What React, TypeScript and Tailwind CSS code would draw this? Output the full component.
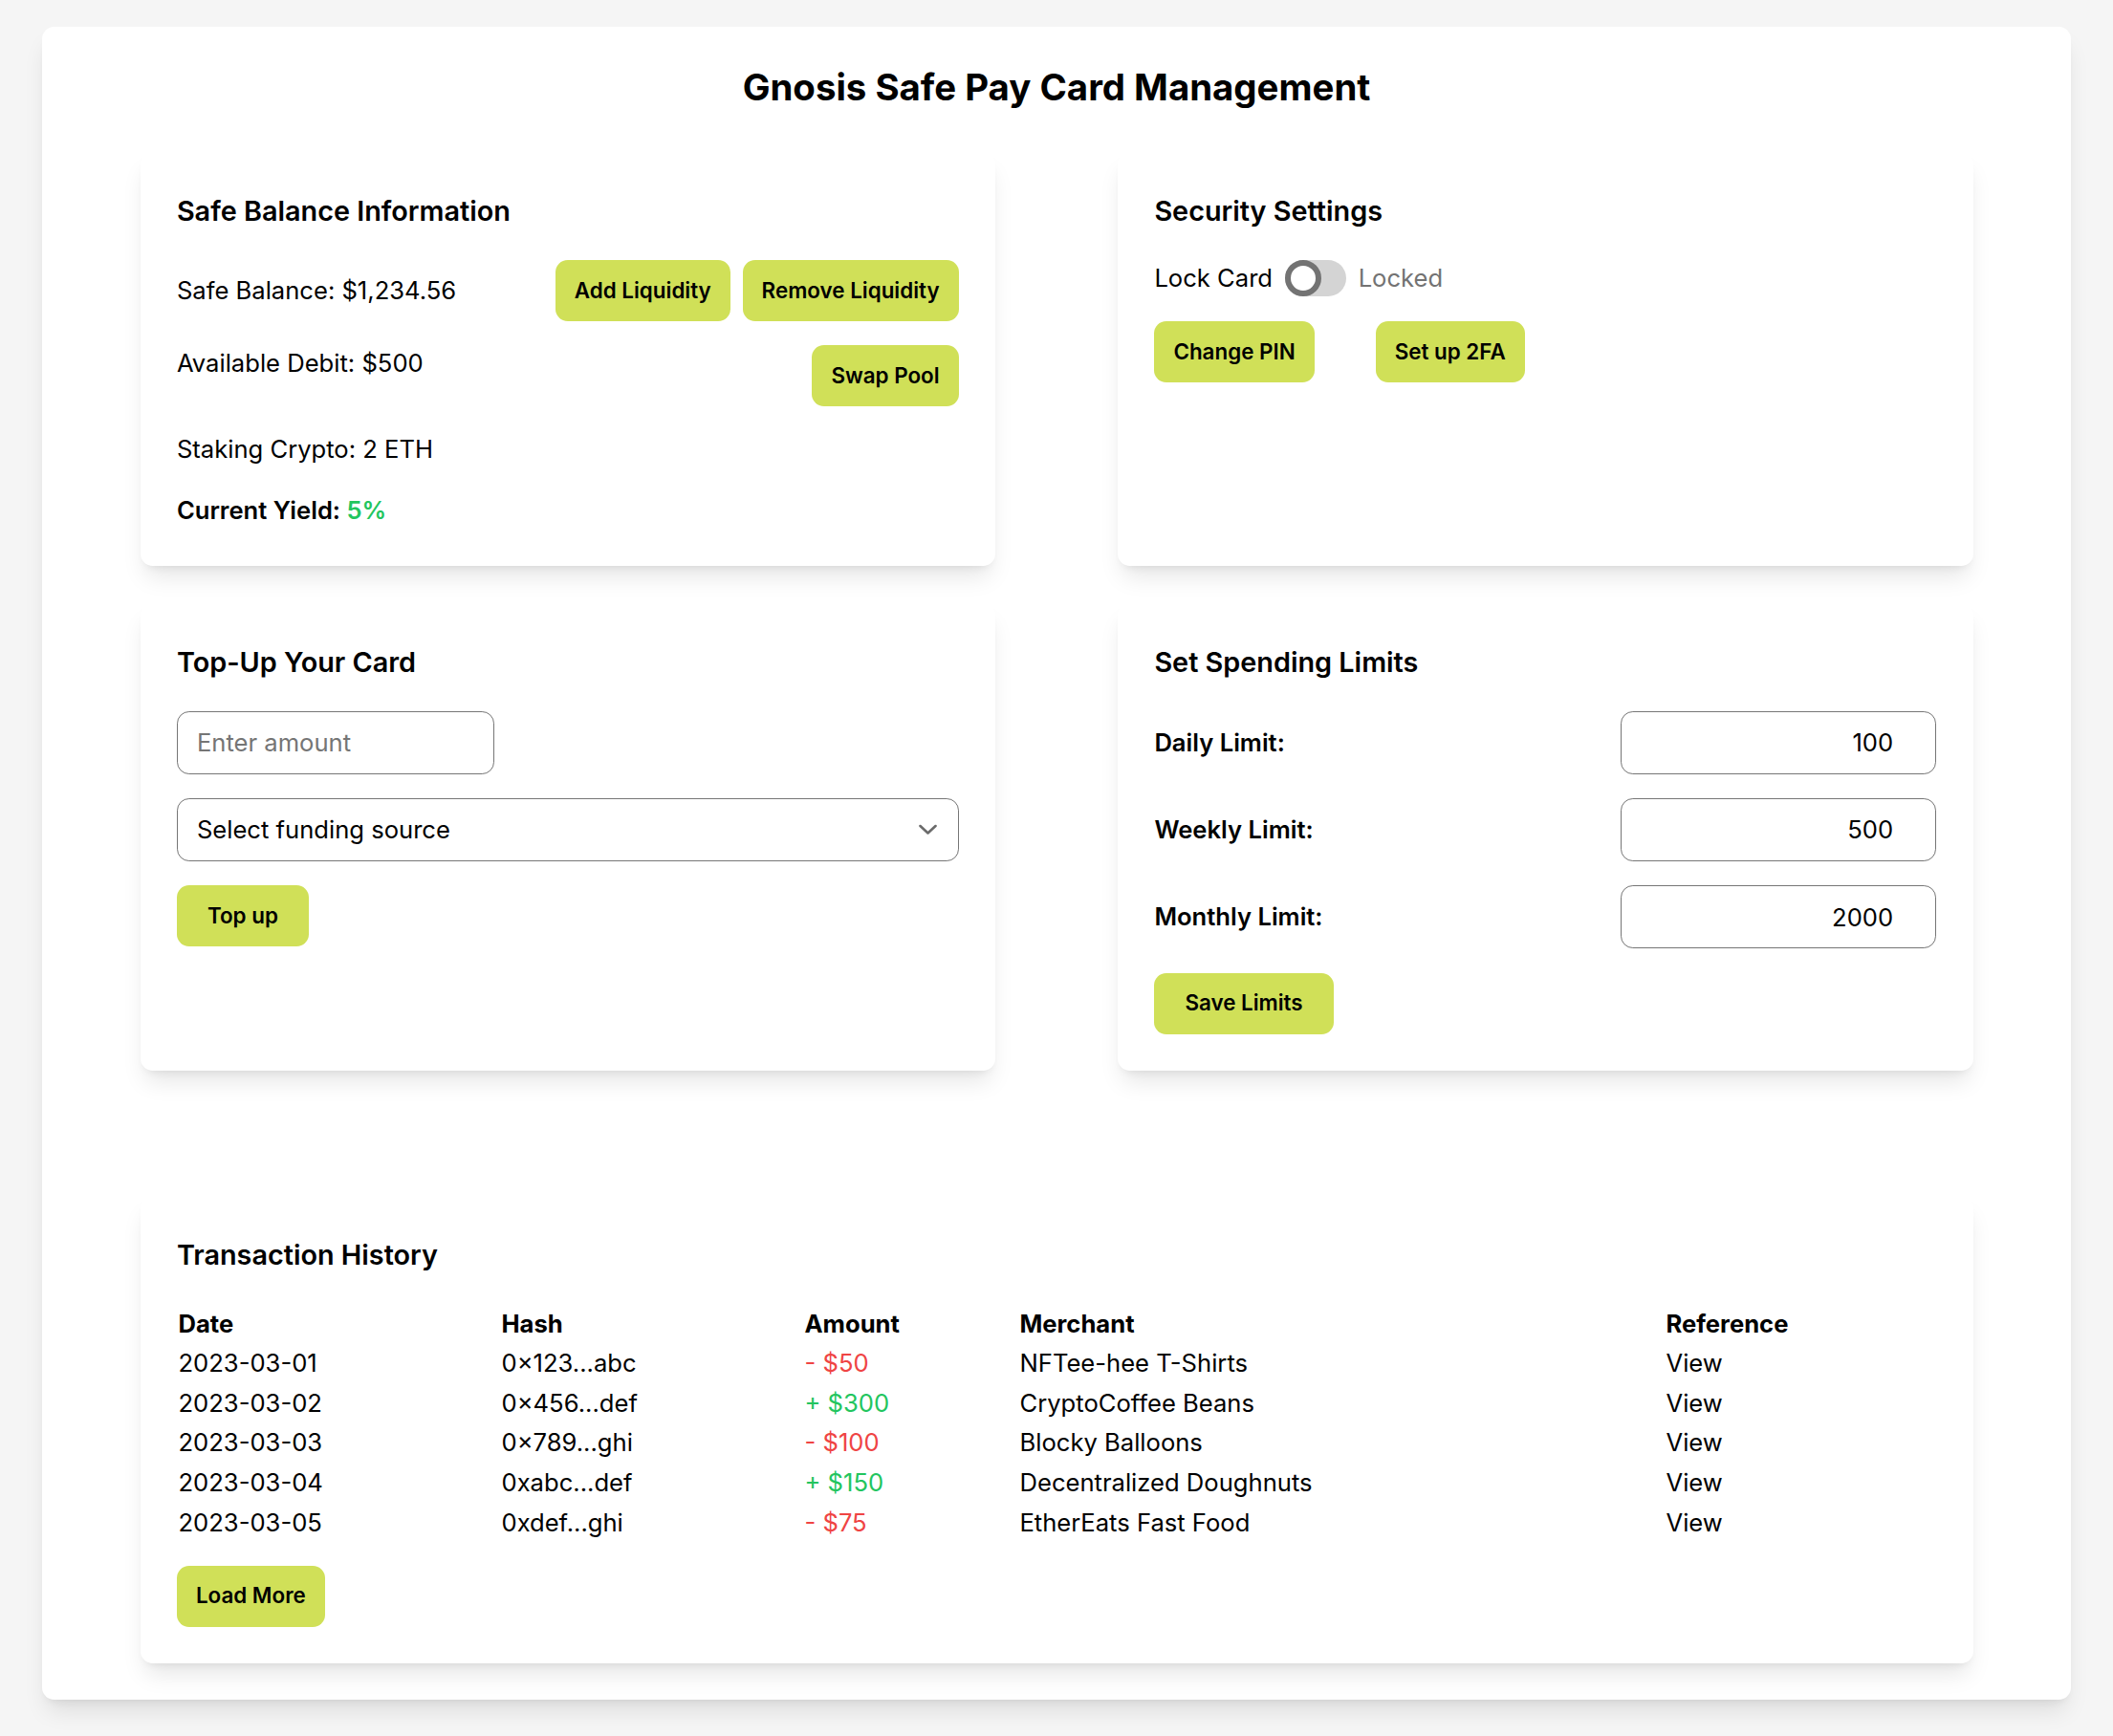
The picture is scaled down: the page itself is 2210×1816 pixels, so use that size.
import React, { useState } from "react";

const transactions = [
    { date: "2023-03-01", hash: "0×123...abc", amount: "- $50", positive: false, merchant: "NFTee-hee T-Shirts" },
    { date: "2023-03-02", hash: "0×456...def", amount: "+ $300", positive: true, merchant: "CryptoCoffee Beans" },
    { date: "2023-03-03", hash: "0×789...ghi", amount: "- $100", positive: false, merchant: "Blocky Balloons" },
    { date: "2023-03-04", hash: "0xabc...def", amount: "+ $150", positive: true, merchant: "Decentralized Doughnuts" },
    { date: "2023-03-05", hash: "0xdef...ghi", amount: "- $75", positive: false, merchant: "EtherEats Fast Food" },
];

const Button: React.FC<{ children: React.ReactNode; wide?: boolean }> = ({ children, wide }) => (
    <button
        className={`h-[64px] ${wide ? "px-[32px]" : "px-[20px]"} rounded-[12.8px] bg-[#d0e058] text-[22.4px] font-semibold text-black whitespace-nowrap`}
    >
        {children}
    </button>
);

const Card: React.FC<{ title: string; className?: string; children: React.ReactNode }> = ({ title, className = "", children }) => (
    <section
        className={`bg-white rounded-[12.8px] p-[38.4px] shadow-[0_16px_24px_-5px_rgba(0,0,0,0.1),0_6px_10px_-6px_rgba(0,0,0,0.1)] ${className}`}
    >
        <h2 className="text-[28.8px] leading-[44.8px] font-semibold mt-[2px] mb-[28px]">{title}</h2>
        {children}
    </section>
);

export default function App() {
    const [locked, setLocked] = useState(false);
    const [limits, setLimits] = useState({ daily: "100", weekly: "500", monthly: "2000" });

    return (
        <div className="min-h-screen bg-[#f5f5f5] px-[44px] pt-[28px] pb-[30px] font-['Inter',sans-serif] text-black text-[25.6px] leading-[38.4px]">
            <div className="bg-white rounded-[12.8px] p-[38.4px] shadow-[0_16px_24px_-5px_rgba(0,0,0,0.1),0_6px_10px_-6px_rgba(0,0,0,0.1)]">
                <h1 className="text-center text-[38.4px] leading-[51.2px] font-bold mb-[41px]">Gnosis Safe Pay Card Management</h1>

                <div className="max-w-[1917px] mx-auto">
                    <div className="grid grid-cols-2 gap-x-[128px] gap-y-[39px]">
                        {/* Balance */}
                        <Card title="Safe Balance Information">
                            <div className="flex flex-col gap-[25.6px]">
                                <div className="flex items-center justify-between">
                                    <p>Safe Balance: $1,234.56</p>
                                    <div className="flex gap-[12.8px]">
                                        <Button>Add Liquidity</Button>
                                        <Button>Remove Liquidity</Button>
                                    </div>
                                </div>
                                <div className="flex items-start justify-between">
                                    <p>Available Debit: $500</p>
                                    <Button>Swap Pool</Button>
                                </div>
                                <p>Staking Crypto: 2 ETH</p>
                                <p className="font-semibold">
                                    Current Yield: <span className="text-[#22c55e]">5%</span>
                                </p>
                            </div>
                        </Card>

                        {/* Security */}
                        <Card title="Security Settings">
                            <div className="flex items-center gap-[12.8px] mb-[25.6px]">
                                <span>Lock Card</span>
                                <button
                                    onClick={() => setLocked(!locked)}
                                    className={`flex w-[64px] h-[38.4px] rounded-full bg-[#d4d4d4] ${locked ? "justify-end" : "justify-start"}`}
                                    aria-label="Lock Card"
                                >
                                    <span className="w-[38.4px] h-[38.4px] rounded-full border-[6.4px] border-[#737373] bg-white" />
                                </button>
                                <span className="text-[#737373]">Locked</span>
                            </div>
                            <div className="flex gap-[64px]">
                                <Button>Change PIN</Button>
                                <Button>Set up 2FA</Button>
                            </div>
                        </Card>

                        {/* Top up */}
                        <Card title="Top-Up Your Card">
                            <div className="flex flex-col items-start gap-[25.6px]">
                                <input
                                    placeholder="Enter amount"
                                    className="w-[332px] h-[65.6px] px-[20px] border border-[#767676] rounded-[12.8px] placeholder:text-[#757575] outline-none"
                                />
                                <div className="relative w-full">
                                    <select
                                        defaultValue=""
                                        className="w-full h-[65.6px] pl-[20px] pr-[60px] border border-[#767676] rounded-[12.8px] bg-white appearance-none outline-none"
                                    >
                                        <option value="">Select funding source</option>
                                        <option value="safe">Gnosis Safe</option>
                                        <option value="bank">Bank account</option>
                                    </select>
                                    <svg
                                        className="absolute right-[23px] top-1/2 -translate-y-1/2 pointer-events-none"
                                        width="19"
                                        height="11"
                                        viewBox="0 0 19 11"
                                        fill="none"
                                    >
                                        <path d="M1.5 1.5L9.5 9L17.5 1.5" stroke="#6b6b6b" strokeWidth="2.6" strokeLinecap="round" strokeLinejoin="round" />
                                    </svg>
                                </div>
                                <Button wide>Top up</Button>
                            </div>
                        </Card>

                        {/* Limits */}
                        <Card title="Set Spending Limits">
                            <div className="flex flex-col gap-[25.6px]">
                                {(
                                    [
                                        ["daily", "Daily Limit:"],
                                        ["weekly", "Weekly Limit:"],
                                        ["monthly", "Monthly Limit:"],
                                    ] as const
                                ).map(([key, label]) => (
                                    <div key={key} className="flex items-center justify-between">
                                        <label className="font-semibold">{label}</label>
                                        <input
                                            value={limits[key]}
                                            onChange={(e) => setLimits({ ...limits, [key]: e.target.value })}
                                            className="w-[330px] h-[65.6px] pl-[20px] pr-[44px] text-right border border-[#767676] rounded-[12.8px] outline-none"
                                        />
                                    </div>
                                ))}
                                <div>
                                    <Button wide>Save Limits</Button>
                                </div>
                            </div>
                        </Card>
                    </div>

                    {/* History */}
                    <Card title="Transaction History" className="mt-[131px]">
                        <table className="w-full table-fixed text-left">
                            <thead>
                                <tr>
                                    <th className="w-[338px] p-[1.6px] font-bold">Date</th>
                                    <th className="w-[317px] p-[1.6px] font-bold">Hash</th>
                                    <th className="w-[225px] p-[1.6px] font-bold">Amount</th>
                                    <th className="w-[676px] p-[1.6px] font-bold">Merchant</th>
                                    <th className="p-[1.6px] font-bold">Reference</th>
                                </tr>
                            </thead>
                            <tbody>
                                {transactions.map((tx) => (
                                    <tr key={tx.date}>
                                        <td className="p-[1.6px]">{tx.date}</td>
                                        <td className="p-[1.6px]">{tx.hash}</td>
                                        <td className={`p-[1.6px] ${tx.positive ? "text-[#22c55e]" : "text-[#ef4444]"}`}>{tx.amount}</td>
                                        <td className="p-[1.6px]">{tx.merchant}</td>
                                        <td className="p-[1.6px]">View</td>
                                    </tr>
                                ))}
                            </tbody>
                        </table>
                        <div className="mt-[24px]">
                            <Button>Load More</Button>
                        </div>
                    </Card>
                </div>
            </div>
        </div>
    );
}
